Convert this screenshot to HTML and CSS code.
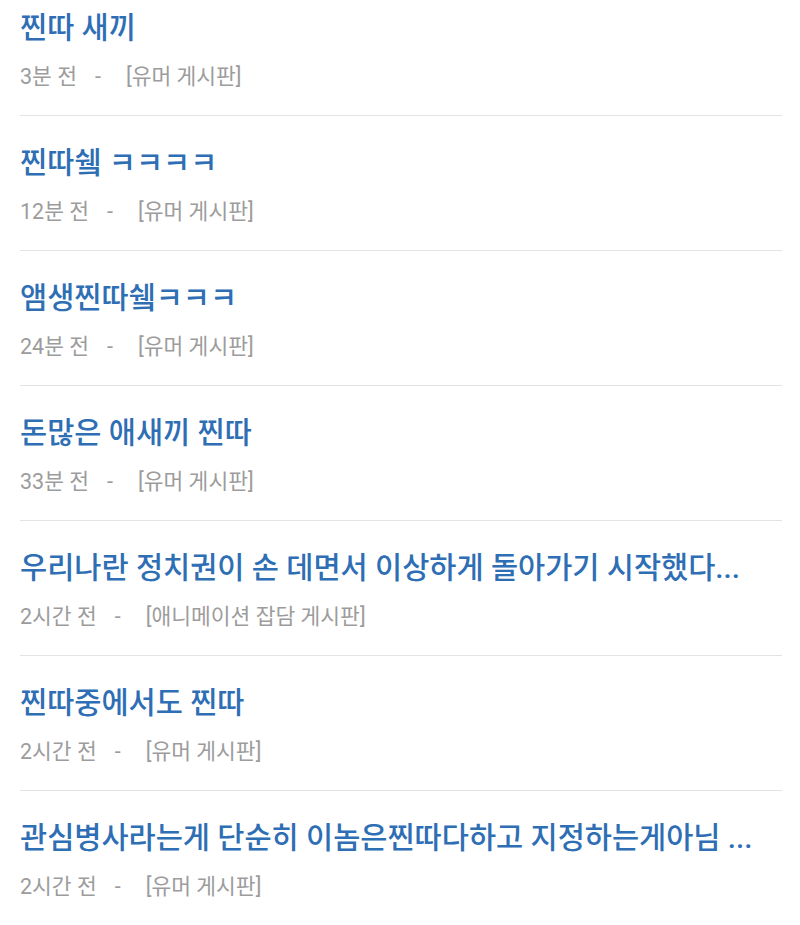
FILE: index.html
```html
<!DOCTYPE html>
<html lang="ko">
<head>
<meta charset="utf-8">
<title>최근 게시글</title>
<link rel="stylesheet" href="styles.css">
</head>
<body>
<ul class="post-list">
  <li class="post">
    <a class="post-title" href="#">찐따 새끼</a>
    <div class="post-meta"><span class="time">3분 전</span><span class="dash">-</span><span class="board">[유머 게시판]</span></div>
  </li>
  <li class="post">
    <a class="post-title" href="#">찐따쉨 ㅋㅋㅋㅋ</a>
    <div class="post-meta"><span class="time">12분 전</span><span class="dash">-</span><span class="board">[유머 게시판]</span></div>
  </li>
  <li class="post">
    <a class="post-title" href="#">앰생찐따쉨ㅋㅋㅋ</a>
    <div class="post-meta"><span class="time">24분 전</span><span class="dash">-</span><span class="board">[유머 게시판]</span></div>
  </li>
  <li class="post">
    <a class="post-title" href="#">돈많은 애새끼 찐따</a>
    <div class="post-meta"><span class="time">33분 전</span><span class="dash">-</span><span class="board">[유머 게시판]</span></div>
  </li>
  <li class="post">
    <a class="post-title" href="#">우리나란 정치권이 손 데면서 이상하게 돌아가기 시작했다...</a>
    <div class="post-meta"><span class="time">2시간 전</span><span class="dash">-</span><span class="board">[애니메이션 잡담 게시판]</span></div>
  </li>
  <li class="post">
    <a class="post-title" href="#">찐따중에서도 찐따</a>
    <div class="post-meta"><span class="time">2시간 전</span><span class="dash">-</span><span class="board">[유머 게시판]</span></div>
  </li>
  <li class="post">
    <a class="post-title" href="#">관심병사라는게 단순히 이놈은찐따다하고 지정하는게아님 ...</a>
    <div class="post-meta"><span class="time">2시간 전</span><span class="dash">-</span><span class="board">[유머 게시판]</span></div>
  </li>
</ul>
</body>
</html>
```

FILE: styles.css
```css
html, body {
  margin: 0;
  padding: 0;
  background: #ffffff;
}

body {
  font-family: Roboto, "Noto Sans CJK KR", sans-serif;
}

.post-list {
  list-style: none;
  margin: 0;
  padding: 0 18px 0 20px;
}

.post {
  padding: 29px 0 23px;
  border-bottom: 1px solid #e3e3e3;
}

.post:first-child {
  padding-top: 10px;
}

.post:last-child {
  border-bottom: none;
}

.post-title {
  display: block;
  font-size: 29.5px;
  line-height: 36px;
  font-weight: 500;
  color: #2e6eb4;
  text-decoration: none;
  white-space: nowrap;
}

.post-meta {
  margin-top: 16px;
  font-size: 21.5px;
  line-height: 30px;
  color: #9c9c9c;
  white-space: nowrap;
}

.dash {
  margin-left: 18px;
}

.board {
  margin-left: 25px;
}
```
